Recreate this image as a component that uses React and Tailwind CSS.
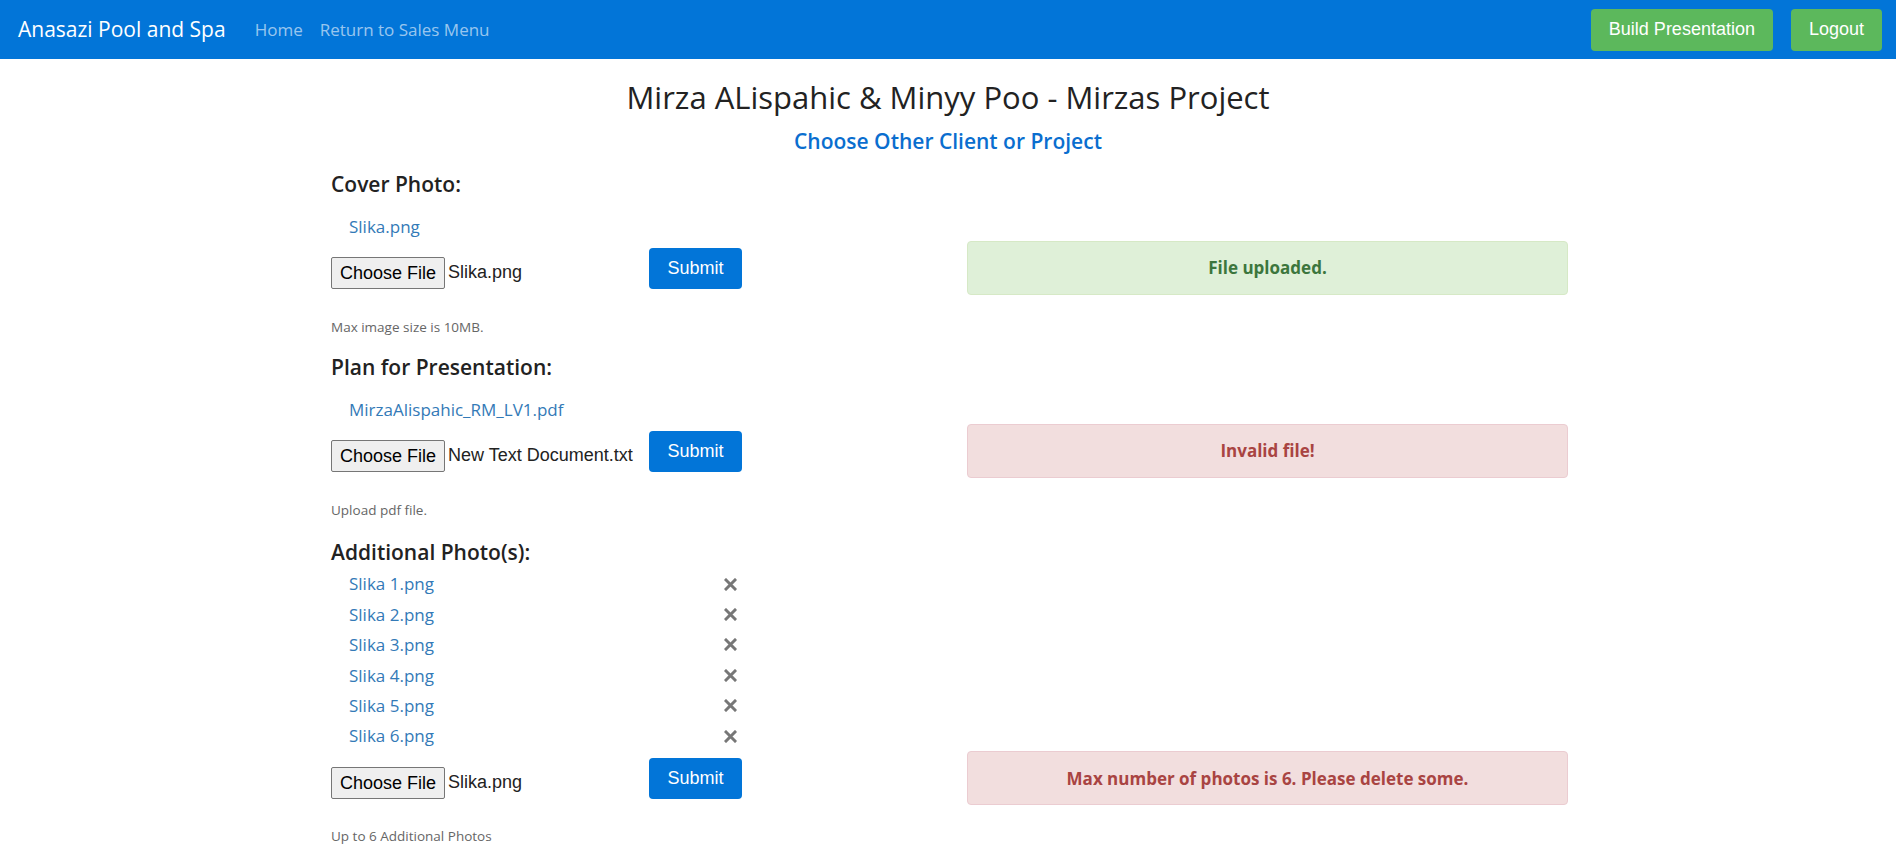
import React from 'react';

const sans = { fontFamily: '"Open Sans", "Noto Sans", sans-serif' };

const XIcon = () => (
    <svg width="13" height="13" viewBox="0 0 13 13" className="text-[#777]">
        <path d="M2 2 L11 11 M11 2 L2 11" stroke="currentColor" strokeWidth="3" strokeLinecap="square" />
    </svg>
);

const UploadRow = ({ fileName, alert, kind }) => (
    <div className="flex items-center h-[54px]">
        <div className="ml-[3px] w-[411px] flex items-end justify-between font-['Liberation_Sans',Arial,sans-serif]">
            <div className="flex items-center">
                <button className="h-[32px] px-[8px] bg-[#efefef] border border-[#767676] rounded-[2px] text-[18px] text-black leading-none">
                    Choose File
                </button>
                <span className="ml-[3px] text-[18px] text-[#222]">{fileName}</span>
            </div>
            <button className="h-[41px] w-[93px] bg-[#0275d8] rounded-[4px] text-white text-[18px]">Submit</button>
        </div>
        {alert && (
            <div
                className={`ml-auto w-[601px] h-[54px] rounded-[4px] border flex items-center justify-center text-[17px] font-bold ${
                    kind === 'success'
                        ? 'bg-[#dff0d8] border-[#d6e9c6] text-[#3c763d]'
                        : 'bg-[#f2dede] border-[#ebccd1] text-[#a94442]'
                }`}
            >
                {alert}
            </div>
        )}
    </div>
);

const Heading = ({ children, className = '' }) => (
    <h3 className={`ml-[3px] text-[21px] leading-[28px] font-semibold text-[#222] ${className}`}>{children}</h3>
);

const Help = ({ children, className = '' }) => (
    <p className={`ml-[3px] text-[13.5px] leading-[18px] text-[#666] ${className}`}>{children}</p>
);

export default function App() {
    const photos = ['Slika 1.png', 'Slika 2.png', 'Slika 3.png', 'Slika 4.png', 'Slika 5.png', 'Slika 6.png'];

    return (
        <div style={sans} className="min-h-screen bg-white">
            <nav className="h-[59px] bg-[#0275d8] flex items-center pl-[18px] pr-[14px]">
                <span className="text-white text-[21px]">Anasazi Pool and Spa</span>
                <a className="ml-[29px] text-[17px] text-white/60">Home</a>
                <a className="ml-[17px] text-[17px] text-white/60">Return to Sales Menu</a>
                <div className="ml-auto flex gap-[18px] font-['Liberation_Sans',Arial,sans-serif]">
                    <button className="h-[42px] px-[18px] bg-[#5cb85c] rounded-[4px] text-white text-[18px]">
                        Build Presentation
                    </button>
                    <button className="h-[42px] px-[18px] bg-[#5cb85c] rounded-[4px] text-white text-[18px]">
                        Logout
                    </button>
                </div>
            </nav>

            <h2 className="mt-[18px] text-center text-[31px] leading-[40px] font-medium text-[#222]">
                Mirza ALispahic &amp; Minyy Poo - Mirzas Project
            </h2>
            <div className="mt-[10px] text-center text-[21px] leading-[28px] font-semibold">
                <a className="text-[#0a6ecf]">Choose Other Client or Project</a>
            </div>

            <div className="w-[1240px] mx-auto mt-[15px]">
                <Heading>Cover Photo:</Heading>
                <a className="block mt-[17px] pl-[21px] text-[17px] leading-[24px] text-[#337ab7]">Slika.png</a>
                <div className="mt-[2px]">
                    <UploadRow fileName="Slika.png" alert="File uploaded." kind="success" />
                </div>
                <Help className="mt-[23px]">Max image size is 10MB.</Help>

                <Heading className="mt-[17px]">Plan for Presentation:</Heading>
                <a className="block mt-[17px] pl-[21px] text-[17px] leading-[24px] text-[#337ab7]">MirzaAlispahic_RM_LV1.pdf</a>
                <div className="mt-[2px]">
                    <UploadRow fileName="New Text Document.txt" alert="Invalid file!" kind="danger" />
                </div>
                <Help className="mt-[23px]">Upload pdf file.</Help>

                <Heading className="mt-[19px]">Additional Photo(s):</Heading>
                <ul className="mt-[3px] ml-[3px] w-[411px]">
                    {photos.map((p) => (
                        <li key={p} className="h-[30.4px] flex items-center justify-between pl-[18px] pr-[5px]">
                            <a className="text-[17px] text-[#337ab7]">{p}</a>
                            <XIcon />
                        </li>
                    ))}
                </ul>
                <div>
                    <UploadRow fileName="Slika.png" alert="Max number of photos is 6. Please delete some." kind="danger" />
                </div>
                <Help className="mt-[22px]">Up to 6 Additional Photos</Help>
            </div>
        </div>
    );
}
